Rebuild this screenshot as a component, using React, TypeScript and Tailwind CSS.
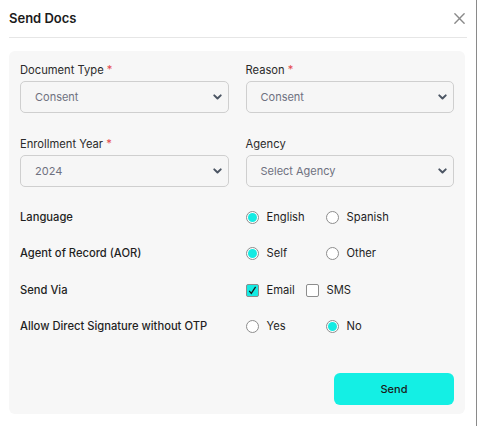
import React from "react";

const font = { fontFamily: "Inter, 'Noto Sans', sans-serif" };

function Chevron() {
  return (
    <svg width="11" height="11" viewBox="0 0 12 12" className="absolute right-[5px] top-1/2 -translate-y-1/2">
      <path d="M2.5 4.2 L6 7.6 L9.5 4.2" fill="none" stroke="#4b5563" strokeWidth="2.2" strokeLinecap="round" strokeLinejoin="round" />
    </svg>
  );
}

function SelectBox({ label, value, required }: { label: string; value: string; required?: boolean }) {
  return (
    <div className="flex flex-col">
      <label className="h-[16px] text-[11.2px] leading-[16px] text-[#2b2b2b] mb-[3px]">
        {label}
        {required && <span className="text-[#e5484d]"> *</span>}
      </label>
      <div className="relative h-[32px] rounded-[5px] border border-[#cfcfcf] bg-[#f6f6f6]">
        <span className="absolute left-[14px] top-1/2 -translate-y-1/2 text-[11px] text-[#6e7180]">{value}</span>
        <Chevron />
      </div>
    </div>
  );
}

function Radio({ checked, label, width }: { checked?: boolean; label: string; width: string }) {
  return (
    <div className={`flex items-center ${width}`}>
      <span className="flex h-[13px] w-[13px] items-center justify-center rounded-full border border-[#8d8d8d] bg-white">
        {checked && <span className="h-[9px] w-[9px] rounded-full bg-[#14ebe3]" />}
      </span>
      <span className="ml-[8px] text-[11.2px] text-[#1f1f1f]">{label}</span>
    </div>
  );
}

function Check({ checked, label, width }: { checked?: boolean; label: string; width: string }) {
  return (
    <div className={`flex items-center ${width}`}>
      <span
        className={`flex h-[13px] w-[13px] items-center justify-center rounded-[2px] border border-[#8d8d8d] ${
          checked ? "bg-[#14ebe3]" : "bg-white"
        }`}
      >
        {checked && (
          <svg width="11" height="11" viewBox="0 0 11 11">
            <path d="M2.2 5.8 L4.3 8.3 L8.6 1.8" fill="none" stroke="#1a1a1a" strokeWidth="1.3" />
          </svg>
        )}
      </span>
      <span className="ml-[8px] text-[11.2px] text-[#1f1f1f]">{label}</span>
    </div>
  );
}

function OptionRow({ label, children }: { label: string; children: React.ReactNode }) {
  return (
    <div className="grid grid-cols-2 gap-x-[17px] items-center h-[16px]">
      <span className="text-[11.2px] font-medium text-[#1f1f1f]">{label}</span>
      <div className="flex items-center">{children}</div>
    </div>
  );
}

export default function App() {
  return (
    <div className="h-[426px] w-[478px] bg-white flex" style={font}>
      <div className="w-[477px] h-full border-r border-[#8a8a8a] bg-white">
        <div className="flex h-[38px] items-center justify-between mx-[9px] border-b border-[#e6e6e6]">
          <h2 className="text-[13px] font-semibold text-[#1b1b1b]">Send Docs</h2>
          <svg width="13" height="13" viewBox="0 0 14 14" className="mr-[1px]">
            <path d="M2 2 L12 12 M12 2 L2 12" stroke="#8a8a8a" strokeWidth="1.5" strokeLinecap="round" />
          </svg>
        </div>
        <div className="mx-[9px] mt-[13px] w-[456px] h-[363px] rounded-[6px] bg-[#f7f7f7] px-[11px] pt-[11px]">
          <div className="grid grid-cols-2 gap-x-[17px] gap-y-[23px]">
            <SelectBox label="Document Type" value="Consent" required />
            <SelectBox label="Reason" value="Consent" required />
            <SelectBox label="Enrollment Year" value="2024" required />
            <SelectBox label="Agency" value="Select Agency" />
          </div>
          <div className="mt-[22px] flex flex-col gap-[20px]">
            <OptionRow label="Language">
              <Radio checked label="English" width="w-[80px]" />
              <Radio label="Spanish" width="w-[80px]" />
            </OptionRow>
            <OptionRow label="Agent of Record (AOR)">
              <Radio checked label="Self" width="w-[80px]" />
              <Radio label="Other" width="w-[80px]" />
            </OptionRow>
            <div className="mt-[1px]">
              <OptionRow label="Send Via">
                <Check checked label="Email" width="w-[60px]" />
                <Check label="SMS" width="w-[60px]" />
              </OptionRow>
            </div>
            <OptionRow label="Allow Direct Signature without OTP">
              <Radio label="Yes" width="w-[80px]" />
              <Radio checked label="No" width="w-[80px]" />
            </OptionRow>
          </div>
          <div className="mt-[39px] flex justify-end">
            <button className="h-[32px] w-[120px] rounded-[6px] bg-[#14efe4] text-[11px] font-medium text-[#1a1a1a]">
              Send
            </button>
          </div>
        </div>
      </div>
    </div>
  );
}
